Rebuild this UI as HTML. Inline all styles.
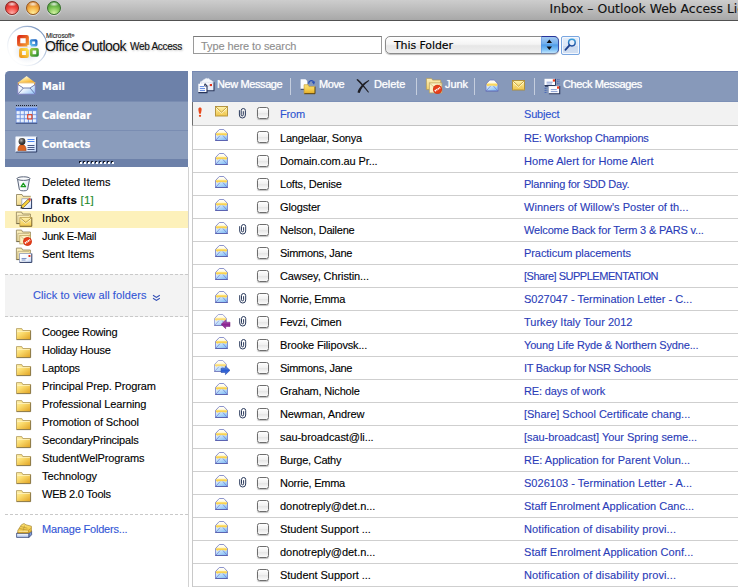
<!DOCTYPE html>
<html lang="en"><head><meta charset="utf-8"><title>Inbox - Outlook Web Access Light</title>
<style>
html,body{margin:0;padding:0;}
body{width:738px;height:587px;overflow:hidden;background:#fff;position:relative;font-family:"Liberation Sans","DejaVu Sans",sans-serif;font-size:11px;letter-spacing:-0.2px;color:#000;-webkit-text-stroke:0.12px;}
div,span,svg{position:absolute;}
svg,symbol{overflow:visible;}
#defs{width:0;height:0;}
/* title bar */
#tb{left:0;top:0;width:738px;height:20px;background:linear-gradient(#cdcdcd,#bbbbbb 50%,#a8a8a8);border-bottom:1px solid #515151;}
#tb .t{left:549.500px;top:0;line-height:17px;font-family:"DejaVu Sans","Liberation Sans",sans-serif;font-size:12.400px;letter-spacing:0;color:#111;white-space:nowrap;}
.tl{top:1px;width:14px;height:14px;border-radius:7px;box-sizing:border-box;box-shadow:0 1px 1px rgba(255,255,255,.55);}
/* header */
#ms{left:46px;top:32px;font-size:6.5px;line-height:8px;letter-spacing:-0.1px;color:#222;}
#oo{-webkit-text-stroke:0;text-shadow:1px 1px 2px rgba(0,0,0,.25);left:45px;top:36.500px;font-size:14px;line-height:18px;letter-spacing:-0.53px;color:#111;white-space:nowrap;}
#wa{text-shadow:1px 1px 2px rgba(0,0,0,.25);left:130px;top:39.500px;font-size:10px;line-height:14px;letter-spacing:-0.29px;color:#111;white-space:nowrap;}
#sb{left:193px;top:36px;width:189px;height:18px;box-sizing:border-box;border:1px solid #9a9a9a;border-top-color:#7a7a7a;background:#fff;}
#sb span{left:7px;top:1px;line-height:17px;font-size:11px;color:#8e8e8e;letter-spacing:-0.1px;white-space:nowrap;}
#sel{left:385px;top:36px;width:174px;height:18px;box-sizing:border-box;border:1px solid #8b8b8b;border-radius:5px;background:linear-gradient(#ffffff,#f4f4f4 45%,#e6e6e6 55%,#f0f0f0);box-shadow:0 1px 1px rgba(0,0,0,.25);}
#sel .t{left:8px;top:1px;line-height:16px;font-family:"DejaVu Sans","Liberation Sans",sans-serif;font-size:11px;letter-spacing:-0.1px;color:#000;white-space:nowrap;}
#sel .a{right:-1px;top:-1px;width:18px;height:18px;box-sizing:border-box;border:1px solid #3a50a8;border-top-color:#26349a;border-bottom-color:#7a88a8;border-left-color:rgba(90,140,220,.5);border-radius:0 5px 5px 0;background:linear-gradient(#a4c8f0,#72b0ee 42%,#4e9ce8 50%,#7cc0f6 78%,#bfe4fc);}
#sbtn{left:561px;top:36px;width:18.500px;height:18.500px;box-sizing:border-box;border:1px solid #7aa6e0;border-radius:2px;background:linear-gradient(#e4edfa 0%,#dce7f7 50%,#cad9ee 52%,#d3e0f2 100%);box-shadow:inset 0 0 0 1px #f4f8fd;}
/* nav */
#nav{left:5px;top:71px;width:183px;height:96px;background:#6d81a9;border-radius:4.500px 0 0 0;overflow:hidden;}
#nav .n{left:0;width:183px;height:29px;box-sizing:border-box;}
#nav .n span{left:37px;top:1px;line-height:29px;font-weight:bold;font-family:"DejaVu Sans Condensed","Liberation Sans",sans-serif;font-size:11px;color:#fff;letter-spacing:-0.1px;}
#nav .l{background:#8a9cbc;border-top:1px solid #7a8db2;}
#nav .l span{top:-1px;}
#grip{left:74px;top:90px;}
#split{left:188px;top:167px;width:1px;height:420px;background:#d2d2d2;}
/* folders */
.fi{left:5px;width:183px;height:18px;}
.fi span{left:37px;top:1px;line-height:17px;white-space:nowrap;font-size:11px;letter-spacing:0;}
.fi .fic{left:11px;top:1px;}
.fi.sel{background:#fdf1bb;}
#more{left:5px;top:274px;width:183px;height:43px;background:#f3f3f3;border-top:1px dashed #c9c9c9;border-bottom:1px dashed #c9c9c9;box-sizing:border-box;}
#more span{letter-spacing:0.09px;left:28px;top:0;line-height:41px;color:#3356d6;white-space:nowrap;}
#dash2{left:5px;top:514px;width:183px;height:0;border-top:1px dashed #c9c9c9;}
a{color:inherit;text-decoration:none;}
/* toolbar */
#tool{left:192px;top:71px;width:546px;height:31px;background:#8799ba;box-sizing:border-box;border-top:1px solid #7487b1;border-bottom:1px solid #7d90b6;}
#tool:before{content:"";position:absolute;left:0;top:0;width:1px;height:29px;background:#7a8db5;}
#tool .t{top:0;line-height:25px;color:#fff;white-space:nowrap;font-size:11px;letter-spacing:-0.4px;text-shadow:0 0 1px rgba(255,255,255,.6);}
#tool .s{top:6px;width:1px;height:17px;background:#c5cede;}
#tool svg{top:5px;}
/* list header */
#lh{left:192px;top:102px;width:546px;height:24px;box-sizing:border-box;background:#f2f2f2;border-left:1px solid #6e6e6e;border-bottom:1px solid #c2c2c2;}
#lh .t{top:1px;line-height:23px;color:#2c52d0;}
#lline{left:192px;top:126px;width:1px;height:461px;background:#c8c8c8;}
/* rows */
.row{left:193px;width:545px;height:23px;box-sizing:border-box;border-bottom:1px solid #cfcfcf;}
.row .ri{left:22px;top:3px;}
.row .clip{left:46px;top:5px;}
.cb{left:64px;top:5px;width:12px;height:12px;box-sizing:border-box;border:1px solid #6e6e6e;border-radius:2.500px;background:linear-gradient(#fefefe,#f0f0f0 50%,#e6e6e6 52%,#fafafa);box-shadow:0 1px 1px rgba(0,0,0,.25);}
.fr{left:87px;top:0;line-height:22px;white-space:nowrap;color:#000;}
.su{left:331px;top:0;line-height:22px;white-space:nowrap;color:#2a3cb8;letter-spacing:-0.15px;}
.r0 .ri{top:2px;}
.r0 .cb{top:4px;}

</style></head>
<body>
<svg id="defs" width="0" height="0" aria-hidden="true">
<defs>
<linearGradient id="g-env" x1="0" y1="0" x2=".7" y2="1"><stop offset="0" stop-color="#f4faff"/><stop offset="1" stop-color="#86c0f6"/></linearGradient>
<linearGradient id="g-flap" x1="0" y1="0" x2="0" y2="1"><stop offset="0" stop-color="#ffffff"/><stop offset=".42" stop-color="#fffbe4"/><stop offset=".6" stop-color="#fbdc6a"/><stop offset=".76" stop-color="#f8d04e"/><stop offset="1" stop-color="#fdeeb0"/></linearGradient>
<linearGradient id="g-fold" x1="0" y1="0" x2=".8" y2="1"><stop offset="0" stop-color="#fff4b4"/><stop offset=".45" stop-color="#fbdc6e"/><stop offset="1" stop-color="#e4aa2c"/></linearGradient>
<linearGradient id="g-yenv" x1="0" y1="0" x2="0" y2="1"><stop offset="0" stop-color="#fff3ac"/><stop offset="1" stop-color="#f2c84c"/></linearGradient>
<linearGradient id="g-cream" x1="0" y1="0" x2=".6" y2="1"><stop offset="0" stop-color="#fdf3c8"/><stop offset="1" stop-color="#f0d680"/></linearGradient>
<linearGradient id="g-wenv" x1="0" y1="0" x2="1" y2="1"><stop offset="0" stop-color="#ffffff"/><stop offset="1" stop-color="#dfe6f6"/></linearGradient>
<linearGradient id="g-gold" x1="0" y1="0" x2="0" y2="1"><stop offset="0" stop-color="#fbe27a"/><stop offset=".5" stop-color="#f6d050"/><stop offset="1" stop-color="#e2aa26"/></linearGradient>
<linearGradient id="g-cream2" x1="0" y1="0" x2="0" y2="1"><stop offset="0" stop-color="#fdf0bc"/><stop offset="1" stop-color="#f0cf6a"/></linearGradient>
<linearGradient id="g-tray" x1="0" y1="0" x2="0" y2="1"><stop offset="0" stop-color="#ffffff"/><stop offset="1" stop-color="#a8c0ee"/></linearGradient>
<linearGradient id="g-cell" x1="0" y1="0" x2="1" y2="1"><stop offset="0" stop-color="#ffffff"/><stop offset="1" stop-color="#cfe0fa"/></linearGradient>
<linearGradient id="g-card" x1="0" y1="0" x2="1" y2="1"><stop offset="0" stop-color="#ffffff"/><stop offset=".6" stop-color="#f4f8ff"/><stop offset="1" stop-color="#b8d0f8"/></linearGradient>
<radialGradient id="g-head" cx=".4" cy=".35" r=".7"><stop offset="0" stop-color="#b0b0b0"/><stop offset=".5" stop-color="#4a4a4a"/><stop offset="1" stop-color="#1c1c1c"/></radialGradient>
<linearGradient id="g-lens" x1="0" y1="0" x2="0" y2="1"><stop offset="0" stop-color="#3aa0dc"/><stop offset="1" stop-color="#1c4a9c"/></linearGradient>
<linearGradient id="g-oflap" x1=".2" y1="0" x2=".8" y2="1"><stop offset="0" stop-color="#fffdf0"/><stop offset=".45" stop-color="#fde08c"/><stop offset="1" stop-color="#f7a616"/></linearGradient>
<linearGradient id="g-mbody" x1="0" y1="0" x2="1" y2="1"><stop offset="0" stop-color="#ffffff"/><stop offset=".5" stop-color="#eaf3fe"/><stop offset="1" stop-color="#8cc0f8"/></linearGradient>
<linearGradient id="g-bin" x1="0" y1="0" x2="1" y2="0"><stop offset="0" stop-color="#e8eef8"/><stop offset=".35" stop-color="#ffffff"/><stop offset="1" stop-color="#dfe8f6"/></linearGradient>
<linearGradient id="g-purple" x1="0" y1="0" x2="0" y2="1"><stop offset="0" stop-color="#c870c8"/><stop offset=".5" stop-color="#8a2490"/><stop offset="1" stop-color="#a040a8"/></linearGradient>
<linearGradient id="g-blue" x1="0" y1="0" x2="0" y2="1"><stop offset="0" stop-color="#7aa6f2"/><stop offset=".5" stop-color="#2a5cd2"/><stop offset="1" stop-color="#4a7ae0"/></linearGradient>
<symbol id="i-bfolder" viewBox="0 0 17 18">
 <path d="M.4 2.100 H5.600 L6.600 4 H14.400 V13.600 H.4 Z" fill="url(#g-cream)"/>
 <path d="M1.800 5.400 H13 V13 H1.800 Z" fill="#fdf6d6" fill-opacity=".4"/>
 <path d="M.4 13.600 V2.100 H5.600 L6.600 4 H14.400 V13.600" fill="none" stroke="#8e8058" stroke-width=".8"/>
 <path d="M1.900 13 V5.400 H13" fill="none" stroke="#a89a6c" stroke-width=".6"/>
 <path d="M.4 13.600 H14.400" stroke="#5a5238" stroke-width=".9"/>
</symbol>
<symbol id="i-open" viewBox="0 0 18 16">
 <rect x=".5" y="4.5" width="12" height="7" fill="url(#g-env)"/>
 <path d="M.5 4.500 L4.300 .5 H8.800 L12.500 4.500 L12.500 5.200 L10.600 7.300 L9.400 6.200 H3.600 L2.400 7.300 L.5 5.200 Z" fill="url(#g-flap)"/>
 <path d="M.9 11.200 L5 6.600 M12.100 11.200 L8 6.600" fill="none" stroke="#7488d0" stroke-width=".8"/>
 <path d="M.5 4.500 L4.300 .5 H8.800 L12.500 4.500" fill="none" stroke="#7078c0" stroke-width=".8"/>
 <path d="M.5 4.500 V11.500 M12.500 11.500 V4.500" fill="none" stroke="#747cc4" stroke-width=".8"/><path d="M.2 11.500 H12.800" stroke="#5c64b2" stroke-width="1"/>
</symbol>
<symbol id="i-reply" viewBox="0 0 18 16">
 <g opacity=".8" transform="translate(-1 0)"><use href="#i-open"/></g>
 <path d="M6.100 10.300 L10.700 6 V8.200 H15 V12.500 H10.700 V14.700 Z" fill="url(#g-purple)" stroke="#701878" stroke-width=".5"/>
</symbol>
<symbol id="i-fwd" viewBox="0 0 18 16">
 <g opacity=".8" transform="translate(-1 0)"><use href="#i-open"/></g>
 <path d="M15 10.300 L10.400 6 V8.200 H6.100 V12.500 H10.400 V14.700 Z" fill="url(#g-blue)" stroke="#1c3c9c" stroke-width=".5"/>
</symbol>
<symbol id="i-clip" viewBox="0 0 8 12">
 <path d="M.7 2.200 V7 A3 3 0 0 0 6.700 7 V2.600 A2.100 2.100 0 0 0 2.500 2.600 V6.800 A1.050 1.050 0 0 0 4.600 6.800 V3.200" fill="none" stroke="#2a3a5c" stroke-width="1"/>
</symbol>
<symbol id="i-folder" viewBox="0 0 16 13">
 <path d="M.5 .6 H5.800 L6.800 2.500 H14.600 V11.600 H.5 Z" fill="url(#g-fold)"/>
 <path d="M1.200 3.300 H13.800" stroke="#fff6c8" stroke-width=".9"/>
 <path d="M14.600 2.500 V11.600 H.5" fill="none" stroke="#7c6a3c" stroke-width=".9"/>
 <path d="M.5 11.600 V.6 H5.800 L6.800 2.500 H14.600" fill="none" stroke="#b09858" stroke-width=".8"/>
</symbol>
<symbol id="i-yenv" viewBox="0 0 14 11">
 <rect x=".5" y=".5" width="12" height="9.500" fill="url(#g-yenv)" stroke="#ae8c34" stroke-width=".9"/>
 <path d="M1 9.600 L4.800 5.600 M12 9.600 L8.200 5.600" fill="none" stroke="#e6c25a" stroke-width=".7"/>
 <path d="M.9 1.800 L6.500 7 L12.100 1.800" fill="none" stroke="#fffbe2" stroke-width="1"/>
 <path d="M.9 1 L6.500 6.200 L12.100 1" fill="none" stroke="#b8922c" stroke-width=".8"/>
</symbol>
</defs>
</svg>
<div id="tb">
 <span class="tl" style="left:5px;background:radial-gradient(ellipse 5px 2.500px at 50% 17%,rgba(255,255,255,.85),rgba(255,255,255,0)),radial-gradient(circle at 50% 95%,#ffb4ae 0%,#f4473f 48%,#b01c1c 100%);border:1px solid #8c2420"></span>
 <span class="tl" style="left:26px;background:radial-gradient(ellipse 5px 2.500px at 50% 17%,rgba(255,255,255,.85),rgba(255,255,255,0)),radial-gradient(circle at 50% 95%,#fff0a0 0%,#f6b244 48%,#c2641a 100%);border:1px solid #96561c"></span>
 <span class="tl" style="left:47px;background:radial-gradient(ellipse 5px 2.500px at 50% 17%,rgba(255,255,255,.85),rgba(255,255,255,0)),radial-gradient(circle at 50% 95%,#d8f4a8 0%,#7cc452 48%,#2e7a24 100%);border:1px solid #35702a"></span>
 <span class="t">Inbox – Outlook Web Access Light</span>
</div>
<svg id="logo" style="left:0;top:21px" width="60" height="50" viewBox="0 0 60 50">
 <defs>
  <linearGradient id="lg-c" x1=".15" y1=".85" x2=".85" y2=".15"><stop offset="0" stop-color="#a9bcd8" stop-opacity=".04"/><stop offset=".45" stop-color="#9db2d2" stop-opacity=".4"/><stop offset="1" stop-color="#7f9ac2"/></linearGradient>
  <radialGradient id="lg-s" cx=".5" cy=".5" r=".5"><stop offset="0" stop-color="#b9c4da" stop-opacity=".55"/><stop offset=".6" stop-color="#c9d2e4" stop-opacity=".3"/><stop offset="1" stop-color="#dfe5f0" stop-opacity="0"/></radialGradient>
  <linearGradient id="lg-r" x1="0" y1="0" x2="1" y2="1"><stop offset="0" stop-color="#dc2c18"/><stop offset="1" stop-color="#f49a30"/></linearGradient>
  <linearGradient id="lg-b" x1="1" y1="0" x2="0" y2="1"><stop offset="0" stop-color="#1c62c0"/><stop offset="1" stop-color="#68c0ec"/></linearGradient>
  <linearGradient id="lg-y" x1="0" y1="1" x2="1" y2="0"><stop offset="0" stop-color="#f09a1c"/><stop offset="1" stop-color="#fbe04e"/></linearGradient>
  <linearGradient id="lg-g" x1="0" y1="0" x2="1" y2="1"><stop offset="0" stop-color="#96c83a"/><stop offset="1" stop-color="#2f9034"/></linearGradient>
 </defs>
 <circle cx="27.200" cy="25" r="19.600" fill="#fff" stroke="url(#lg-c)" stroke-width="1.100"/>
 <ellipse cx="27.500" cy="30" rx="15" ry="13" fill="url(#lg-s)"/>
 <rect x="18.700" y="15.700" width="8.600" height="8.200" rx=".6" fill="#fdfdfd" fill-opacity=".7" stroke="url(#lg-r)" stroke-width="3.200"/>
 <rect x="31" y="19.400" width="5.300" height="4.900" rx=".5" fill="#fdfdfd" fill-opacity=".7" stroke="url(#lg-b)" stroke-width="2.400"/>
 <rect x="20.600" y="28.500" width="6.800" height="7" rx=".6" fill="#fdfdfd" fill-opacity=".7" stroke="url(#lg-y)" stroke-width="3"/>
 <rect x="31.300" y="28.300" width="6.200" height="6.200" rx=".5" fill="#fdfdfd" fill-opacity=".7" stroke="url(#lg-g)" stroke-width="2.600"/>
 <path d="M27 24.800 H31 M27.600 27.600 H30.600 M29 24 V29" stroke="#fff" stroke-width="1" stroke-opacity=".8"/>
</svg>
<span id="ms">Microsoft<span style="position:static;font-size:4px;vertical-align:top">®</span></span>
<span id="oo">Office Outlook</span>
<span id="wa">Web Access</span>
<div id="sb"><span>Type here to search</span></div>
<div id="sel"><span class="t">This Folder</span><span class="a"><svg width="16" height="16" style="left:0;top:0" viewBox="0 0 16 16"><path d="M7.300 2.500 L10 5.900 H4.600 Z M7.300 13 L10 9.400 H4.600 Z" fill="#0c0c10"/></svg></span></div>
<div id="sbtn"><svg width="16" height="16" style="left:0;top:0" viewBox="0 0 16 16"><circle cx="9.900" cy="5.600" r="3.300" fill="#e4effc" stroke="url(#g-lens)" stroke-width="1.500"/><path d="M7.400 8.300 L3.400 12.800" stroke="#1c3e8c" stroke-width="1.800" stroke-linecap="round"/></svg></div>

<div id="nav">
 <div class="n" style="top:0;height:30px"><svg style="left:12px;top:5px" width="20" height="19" viewBox="0 0 20 19">
   <path d="M.8 6.800 L9.600 0 L18.300 6.800 Z" fill="url(#g-oflap)"/>
   <rect x=".8" y="6.400" width="17.500" height="11.800" fill="url(#g-mbody)"/>
   <path d="M.8 6.400 H18.300 V8.800 L17.300 9.400 V7.600 H1.800 V9.400 L.8 8.800 Z" fill="#f6a81c"/>
   <path d="M2 7.400 H17 V9.300 L13 11.700 H6.200 L2 9.300 Z" fill="#fff"/>
   <path d="M1 8.600 L6.400 12 H13 L18.100 8.600 M1.100 17.900 L6.400 12 M18 17.900 L13 12" fill="none" stroke="#54629a" stroke-width=".8"/>
   <path d="M.8 6.800 V18.200 H18.300 V6.800" fill="none" stroke="#7a78bc" stroke-width=".8"/>
  </svg><span style="line-height:30px">Mail</span></div>
 <div class="n l" style="top:30px"><svg style="left:10px;top:3px" width="22" height="19" viewBox="-0.5 0 22 19">
   <path d="M.5 .5 H21.500" stroke="#1c2030" stroke-width="1" stroke-dasharray="1 1"/>
   <rect x=".3" y="2" width="21.400" height="16.300" fill="#6f92de"/>
   <rect x=".3" y="2" width="21.400" height="3.300" fill="#5a86ea"/>
   <path d="M.3 2.400 H21.700" stroke="#a9c4fa" stroke-width=".8"/>
   <g fill="url(#g-cell)"><rect x="1.1" y="6.2" width="3.200" height="3.100"/><rect x="5.2" y="6.2" width="3.200" height="3.100"/><rect x="9.3" y="6.2" width="3.200" height="3.100"/><rect x="13.4" y="6.2" width="3.200" height="3.100"/><rect x="17.5" y="6.2" width="3.200" height="3.100"/><rect x="1.1" y="10.2" width="3.200" height="3.100"/><rect x="5.2" y="10.2" width="3.200" height="3.100"/><rect x="9.3" y="10.2" width="3.200" height="3.100"/><rect x="13.4" y="10.2" width="3.200" height="3.100"/><rect x="17.5" y="10.2" width="3.200" height="3.100"/><rect x="1.1" y="14.3" width="3.200" height="3.100"/><rect x="5.2" y="14.3" width="3.200" height="3.100"/><rect x="9.3" y="14.3" width="3.200" height="3.100"/><rect x="13.4" y="14.3" width="3.200" height="3.100"/><rect x="17.5" y="14.3" width="3.200" height="3.100"/></g>
   <rect x="12.200" y="9.700" width="4.200" height="4.200" fill="#e4ecfc" stroke="#e23a18" stroke-width="1.100"/>
   <path d="M.3 18.300 H21.700" stroke="#3a4a78" stroke-width=".9"/>
  </svg><span>Calendar</span></div>
 <div class="n l" style="top:59px"><svg style="left:10px;top:5px" width="22" height="16" viewBox="-0.5 -0.5 22 16">
   <rect x=".3" y=".3" width="20.900" height="15.200" fill="url(#g-card)"/>
   <path d="M21.200 .3 V15.500 H.3" fill="none" stroke="#2c3a62" stroke-width="1"/>
   <path d="M.3 15.500 V.3 H21.200" fill="none" stroke="#e8eefa" stroke-width=".7"/>
   <path d="M12 3 H19 M12 5 H19" stroke="#4a84f0" stroke-width="1"/>
   <path d="M12 9 H19 M12 11 H19 M12 13 H19" stroke="#4a5a86" stroke-width="1"/>
   <path d="M2.400 14 C2.400 10 3.800 8.200 6.500 8.200 C9.200 8.200 10.600 10 10.600 14 Z" fill="#dc6420" stroke="#a8400e" stroke-width=".6"/>
   <circle cx="6.500" cy="5" r="3.400" fill="url(#g-head)"/>
  </svg><span>Contacts</span></div>
 <svg id="grip" viewBox="0 0 36 3" width="36" height="3"><rect x="0" y="0" width="2" height="2" fill="#161a2a"/><rect x="1" y="1" width="2" height="2" fill="#fff"/><rect x="4" y="0" width="2" height="2" fill="#161a2a"/><rect x="5" y="1" width="2" height="2" fill="#fff"/><rect x="8" y="0" width="2" height="2" fill="#161a2a"/><rect x="9" y="1" width="2" height="2" fill="#fff"/><rect x="12" y="0" width="2" height="2" fill="#161a2a"/><rect x="13" y="1" width="2" height="2" fill="#fff"/><rect x="16" y="0" width="2" height="2" fill="#161a2a"/><rect x="17" y="1" width="2" height="2" fill="#fff"/><rect x="20" y="0" width="2" height="2" fill="#161a2a"/><rect x="21" y="1" width="2" height="2" fill="#fff"/><rect x="24" y="0" width="2" height="2" fill="#161a2a"/><rect x="25" y="1" width="2" height="2" fill="#fff"/><rect x="28" y="0" width="2" height="2" fill="#161a2a"/><rect x="29" y="1" width="2" height="2" fill="#fff"/><rect x="32" y="0" width="2" height="2" fill="#161a2a"/><rect x="33" y="1" width="2" height="2" fill="#fff"/></svg>
</div>
<div id="split"></div>

<div id="tool">
 <svg style="left:6px;top:6px" width="17" height="16" viewBox="0 0 17 16">
  <path d="M2.200 4.300 L7.600 .4 H10.400 L15.800 4.300 Z" fill="#f4f7fc" stroke="#e4e9f4" stroke-width=".8" stroke-dasharray="1 .8"/>
  <rect x="2" y="4.300" width="14" height="8.400" fill="url(#g-wenv)"/>
  <path d="M2.300 4.600 L9 9 L15.700 4.600" fill="none" stroke="#c4cde2" stroke-width=".7"/>
  <path d="M16 4.300 V12.700 H2" fill="none" stroke="#2c3a5e" stroke-width="1.100"/>
  <rect x="11.800" y="6" width="2.200" height="2.100" fill="#e2301a"/>
  <path d="M.3 5.700 H6.800 L9 7.900 V14.600 H.3 Z" fill="#fdfdff"/>
  <path d="M6.800 5.700 L9 7.900 V14.600 H.3" fill="none" stroke="#27345a" stroke-width="1.100"/>
  <path d="M6.600 5.900 V8.100 H8.800" fill="none" stroke="#27345a" stroke-width=".8"/>
  <path d="M1.800 8.600 H6 M1.800 10.600 H7 M1.800 12.600 H7" stroke="#5c86e2" stroke-width="1"/>
 </svg>
 <span class="t" style="left:25px">New Message</span>
 <span class="s" style="left:98px"></span>
 <svg style="left:108px;top:7px" width="16" height="16" viewBox="0 0 16 16">
  <path d="M.6 .3 H5.500 L7.200 2 V10.600 H.6 Z" fill="#fbfcff"/>
  <path d="M.6 10.300 H5" stroke="#2c3a5e" stroke-width="1"/>
  <path d="M8.600 4.600 C8.800 1.200 12.600 .6 13.800 3.400" fill="none" stroke="#2a50b8" stroke-width="1.300"/>
  <path d="M11.800 3 L14 5.700 L15.200 2.400 Z" fill="#2a50b8"/>
  <path d="M4.100 5.700 H8 L9 7.600 H15 V14.700 H4.100 Z" fill="url(#g-gold)"/>
  <path d="M15 7.600 V14.700 H4.100" fill="none" stroke="#5a420c" stroke-width="1"/>
  <path d="M4.100 14.700 V5.700 H8 L9 7.600 H15" fill="none" stroke="#caa23a" stroke-width=".7"/>
 </svg>
 <span class="t" style="left:127px">Move</span>
 <svg style="left:164px;top:7px" width="14" height="15" viewBox="0 0 14 15">
  <path d="M.4 .7 L1.700 -.1 C5.200 3 9.200 7.600 12.900 13 L12.300 13.700 C8.500 9.200 4.400 4.600 .4 .7 Z" fill="#1e1e24"/>
  <path d="M12.800 1 L13.300 1.700 C9 4.600 5.200 9 3.700 13.900 L1.500 13.600 C2.500 9 6.800 4 12.800 1 Z" fill="#1e1e24"/>
 </svg>
 <span class="t" style="left:182px;letter-spacing:-0.1px">Delete</span>
 <span class="s" style="left:224px"></span>
 <svg style="left:234px;top:6px" width="17" height="16" viewBox="0 0 17 16">
  <path d="M.4 .4 H5.600 L6.600 2.100 H14.700 V11.600 H.4 Z" fill="url(#g-cream2)" stroke="#b49a50" stroke-width=".7"/>
  <rect x="3.300" y="4.900" width="12.600" height="10" fill="#fbf0c4" stroke="#b8a05a" stroke-width=".7"/>
  <path d="M3.600 5.200 L9.600 10.400 L15.600 5.200" fill="none" stroke="#cbb26a" stroke-width=".7"/>
  <circle cx="11.500" cy="11.300" r="4.400" fill="#e8401a"/>
  <circle cx="11.500" cy="11.300" r="4.100" fill="none" stroke="#c42c10" stroke-width=".6"/>
  <path d="M8.800 13 L14.200 9.600" stroke="#fff" stroke-width="1.700" stroke-dasharray="1.300 .5"/>
 </svg>
 <span class="t" style="left:253px;letter-spacing:-0.1px">Junk</span>
 <span class="s" style="left:282px"></span>
 <svg viewBox="-0.5 -0.5 18 16" style="left:293px;top:7px" width="18" height="16"><use href="#i-open"/></svg>
 <svg style="left:320px;top:8px" width="14" height="11"><use href="#i-yenv"/></svg>
 <span class="s" style="left:342px"></span>
 <svg style="left:352px;top:6px" width="17" height="16" viewBox="0 0 17 16">
  <rect x=".5" y=".8" width="11" height="6.700" fill="#fdfdff"/>
  <path d="M11.500 .8 V7.500 H.5" fill="none" stroke="#2c3a5e" stroke-width="1"/>
  <rect x="8.800" y="1.300" width="2.200" height="2.300" fill="#ee3a1e"/>
  <path d="M2.600 4.200 H8.600 M2.600 6 H8" stroke="#6a86c8" stroke-width=".8"/>
  <path d="M13.200 1.700 H15.500 M13.200 3.700 H15.500 M13.200 5.700 H15.500" stroke="#4666b4" stroke-width="1" stroke-dasharray="1.300 .6"/>
  <rect x="4.800" y="8.100" width="10.900" height="7.600" fill="#fdfdff"/>
  <path d="M15.700 8.100 V15.700 H4.800" fill="none" stroke="#2c3a5e" stroke-width="1.100"/>
  <rect x="13" y="8.400" width="2.200" height="2.300" fill="#ee3a1e"/>
  <path d="M6.800 11.600 H12.800 M6.800 13.600 H13.500" stroke="#6a86c8" stroke-width=".8"/>
  <path d="M.6 10.300 H3.200 M.6 12.400 H3.200 M.6 14.500 H3.200" stroke="#4666b4" stroke-width="1" stroke-dasharray="1.300 .6"/>
  <path d="M1 8.300 H4" stroke="#2c3a5e" stroke-width=".9"/>
 </svg>
 <span class="t" style="left:371px">Check Messages</span>
</div>

<div id="lh">
 <svg style="left:4px;top:5px" width="5" height="10" viewBox="-0.5 -0.5 5 10"><path d="M2.500 0 C4.600 0 4.400 2 3.300 6.300 H1.700 C.6 2 .4 0 2.500 0 Z" fill="#e8481a"/><circle cx="2.500" cy="8.300" r="1.150" fill="#e8481a"/></svg>
 <svg style="left:22px;top:4px" width="14" height="11"><use href="#i-yenv"/></svg>
 <svg viewBox="-0.7 0 8 12" style="left:45px;top:6px" width="8" height="12"><use href="#i-clip"/></svg>
 <span class="cb" style="left:64px;top:5px"></span>
 <span class="t" style="left:87px">From</span>
 <span class="t" style="left:331px">Subject</span>
</div>
<div id="lline"></div>
<div class="fi" style="top:173px"><svg class="fic" style="top:3px;left:11px" width="16" height="16" viewBox="0 0 16 16">
  <path d="M1.500 3 L3.300 13.200 C3.500 14.400 5 14.800 7.500 14.800 C10 14.800 11.500 14.400 11.700 13.200 L13.500 3 Z" fill="url(#g-bin)" stroke="#5a6478" stroke-width="1"/>
  <ellipse cx="7.500" cy="2.600" rx="6.500" ry="1.800" fill="#fbfcfe" stroke="#5a6478" stroke-width="1"/>
  <path d="M7.300 7.300 L9.500 10.700 H5.100 Z" fill="none" stroke="#169a1c" stroke-width="1.300" stroke-linejoin="round"/>
 </svg><span style="letter-spacing:0.05px">Deleted Items</span></div>
<div class="fi" style="top:191px"><svg class="fic" style="top:2px" width="17" height="17" viewBox="0 0 17 17">
  <path d="M.5 1.500 H6 L7 3.300 H14.700 V12.400 H.5 Z" fill="url(#g-cream)"/>
  <path d="M.5 12.400 V1.500 H6 L7 3.300 H14.700" fill="none" stroke="#8a7c54" stroke-width=".8"/>
  <path d="M.5 12.400 H6" stroke="#4a442e" stroke-width=".9"/>
  <rect x="5.800" y="5.700" width="9.800" height="9.800" fill="url(#g-card)"/>
  <path d="M15.600 5.700 V15.500 H5.800" fill="none" stroke="#2c3a62" stroke-width="1"/>
  <path d="M5.800 15.500 V5.700 H15.600" fill="none" stroke="#8a94b0" stroke-width=".7"/>
  <path d="M4.800 15.300 L5.600 12.600 L12 6.200 L14 8.200 L7.500 14.600 Z" fill="#f8d03a" stroke="#3a3420" stroke-width=".6"/>
  <path d="M12 6.200 L13 5.200 C13.600 4.700 15.300 6.300 14.900 7.100 L14 8.200 Z" fill="#e4503c"/>
  <path d="M4.800 15.300 L5.300 13.600 L6.500 14.800 Z" fill="#2a2a2a"/>
 </svg><span><b style="font-size:11.500px;letter-spacing:0.350px">Drafts</b> <span style="position:static;color:#1f8a2e;font-size:11.500px;letter-spacing:0.300px">[1]</span></span></div>
<div class="fi sel" style="top:211px;height:17px"><svg class="fic" style="top:-1px" width="17" height="18" viewBox="0 0 17 18">
  <use href="#i-bfolder"/>
  <rect x="3.800" y="7.500" width="12" height="8.800" fill="url(#g-yenv)"/>
  <path d="M4.200 8.600 L9.800 13.200 L15.400 8.600" fill="none" stroke="#fffbe0" stroke-width="1"/>
  <path d="M4.200 7.900 L9.800 12.500 L15.400 7.900" fill="none" stroke="#a8862c" stroke-width=".8"/>
  <path d="M3.800 16.300 V7.500 H15.800" fill="none" stroke="#b89a44" stroke-width=".7"/>
  <path d="M15.800 7.500 V16.300 H3.800" fill="none" stroke="#6a5420" stroke-width=".9"/>
 </svg><span style="top:-1px;letter-spacing:0.08px">Inbox</span></div>
<div class="fi" style="top:227px"><svg class="fic" style="top:1px" width="17" height="18" viewBox="0 0 17 18">
  <use href="#i-bfolder"/>
  <rect x="3.800" y="7.500" width="10.600" height="8.400" fill="#fbf0c4" stroke="#b8a05a" stroke-width=".7"/>
  <path d="M4.200 7.900 L9 12 L13.800 7.900" fill="none" stroke="#c8b06a" stroke-width=".7"/>
  <circle cx="11.500" cy="13.500" r="4.300" fill="#e8401a"/>
  <circle cx="11.500" cy="13.500" r="4" fill="none" stroke="#c42c10" stroke-width=".6"/>
  <path d="M8.900 15.200 L14.100 11.800" stroke="#fff" stroke-width="1.700" stroke-dasharray="1.300 .5"/>
 </svg><span style="letter-spacing:-0.3px">Junk E-Mail</span></div>
<div class="fi" style="top:245px"><svg class="fic" style="top:1px" width="17" height="18" viewBox="0 0 17 18">
  <use href="#i-bfolder"/>
  <rect x="3.500" y="7.500" width="12.300" height="8.900" fill="url(#g-card)"/>
  <path d="M15.800 7.500 V16.400 H3.500" fill="none" stroke="#2c3a62" stroke-width="1"/>
  <path d="M3.500 16.400 V7.500 H15.800" fill="none" stroke="#7f8cb0" stroke-width=".7"/>
  <rect x="12.500" y="9" width="1.900" height="2" fill="#e2301a"/>
  <path d="M5.600 12.500 H10.500 M5.600 14 H9.500" stroke="#7088c0" stroke-width=".9"/>
 </svg><span style="letter-spacing:-0.05px">Sent Items</span></div>
<div id="more"><span><a>Click to view all folders</a></span><svg style="left:147px;top:19px" width="8" height="7" viewBox="-0.5 -0.5 8 7"><path d="M.5 .8 L3.900 2.900 L7.300 .8 M.5 3.800 L3.900 5.900 L7.300 3.800" fill="none" stroke="#2f4cb4" stroke-width="1.100"/></svg></div>
<div id="dash2"></div>
<div class="fi" style="top:520px"><svg class="fic" style="top:3px" width="17" height="16" viewBox="0 0 17 16">
  <path d="M.6 10.400 L3.400 8 H15.600 L13 10.400 Z" fill="#fff" stroke="#4a5a8a" stroke-width=".7"/>
  <path d="M.6 10.400 H13 V14.400 H.6 Z" fill="url(#g-tray)" stroke="#3a4a7a" stroke-width=".8"/>
  <path d="M13 10.400 L15.600 8 V11.800 L13 14.400 Z" fill="#7c9ad8" stroke="#3a4a7a" stroke-width=".8"/>
  <path d="M1.800 7.400 L5.400 1.800 L8 .5 L10 1.800 L15.400 3.200 V8.600 L12.400 10 H1.800 Z" fill="url(#g-gold)" stroke="#a88a3a" stroke-width=".7"/>
  <path d="M4.400 3.400 L11.400 5.200 M3 5.400 L12.400 7.400 M8.500 2.600 L6.600 9.600 M12.400 10 V7.400 L15.400 5" fill="none" stroke="#b8963a" stroke-width=".7"/>
  <path d="M2.400 8.200 H12" stroke="#fff3b8" stroke-width="1"/>
 </svg><span style="color:#3356d6;letter-spacing:-0.19px"><a>Manage Folders...</a></span></div>
<div class="fi" style="top:323px"><svg class="fic" style="top:5px" width="16" height="13"><use href="#i-folder"/></svg><span style="letter-spacing:-0.23px">Coogee Rowing</span></div>
<div class="fi" style="top:341px"><svg class="fic" style="top:5px" width="16" height="13"><use href="#i-folder"/></svg><span style="letter-spacing:-0.23px">Holiday House</span></div>
<div class="fi" style="top:359px"><svg class="fic" style="top:5px" width="16" height="13"><use href="#i-folder"/></svg><span style="letter-spacing:-0.17px">Laptops</span></div>
<div class="fi" style="top:377px"><svg class="fic" style="top:5px" width="16" height="13"><use href="#i-folder"/></svg><span style="letter-spacing:-0.13px">Principal Prep. Program</span></div>
<div class="fi" style="top:395px"><svg class="fic" style="top:5px" width="16" height="13"><use href="#i-folder"/></svg><span style="letter-spacing:-0.1px">Professional Learning</span></div>
<div class="fi" style="top:413px"><svg class="fic" style="top:5px" width="16" height="13"><use href="#i-folder"/></svg><span style="letter-spacing:-0.12px">Promotion of School</span></div>
<div class="fi" style="top:431px"><svg class="fic" style="top:5px" width="16" height="13"><use href="#i-folder"/></svg><span style="letter-spacing:-0.2px">SecondaryPrincipals</span></div>
<div class="fi" style="top:449px"><svg class="fic" style="top:5px" width="16" height="13"><use href="#i-folder"/></svg><span style="letter-spacing:-0.11px">StudentWelPrograms</span></div>
<div class="fi" style="top:467px"><svg class="fic" style="top:5px" width="16" height="13"><use href="#i-folder"/></svg><span style="letter-spacing:-0.08px">Technology</span></div>
<div class="fi" style="top:485px"><svg class="fic" style="top:5px" width="16" height="13"><use href="#i-folder"/></svg><span style="letter-spacing:-0.25px">WEB 2.0 Tools</span></div>
<div id="list">
<div class="row r0" style="top:127px"><svg class="ri" width="18" height="16"><use href="#i-open"/></svg><span class="cb"></span><span class="fr" style="letter-spacing:-0.24px">Langelaar, Sonya</span><span class="su" style="letter-spacing:-0.22px">RE: Workshop Champions</span></div>
<div class="row" style="top:150px"><svg class="ri" width="18" height="16"><use href="#i-open"/></svg><span class="cb"></span><span class="fr" style="letter-spacing:-0.11px">Domain.com.au Pr...</span><span class="su" style="letter-spacing:0.07px">Home Alert for Home Alert</span></div>
<div class="row" style="top:173px"><svg class="ri" width="18" height="16"><use href="#i-open"/></svg><span class="cb"></span><span class="fr" style="letter-spacing:-0.19px">Lofts, Denise</span><span class="su" style="letter-spacing:-0.22px">Planning for SDD Day.</span></div>
<div class="row" style="top:196px"><svg class="ri" width="18" height="16"><use href="#i-open"/></svg><span class="cb"></span><span class="fr" style="letter-spacing:-0.15px">Glogster</span><span class="su" style="letter-spacing:0.03px">Winners of Willow's Poster of th...</span></div>
<div class="row" style="top:219px"><svg class="ri" width="18" height="16"><use href="#i-open"/></svg><svg class="clip" width="8" height="12"><use href="#i-clip"/></svg><span class="cb"></span><span class="fr" style="letter-spacing:-0.21px">Nelson, Dailene</span><span class="su" style="letter-spacing:-0.15px">Welcome Back for Term 3 &amp; PARS v...</span></div>
<div class="row" style="top:242px"><svg class="ri" width="18" height="16"><use href="#i-open"/></svg><span class="cb"></span><span class="fr" style="letter-spacing:-0.29px">Simmons, Jane</span><span class="su" style="letter-spacing:-0.07px">Practicum placements</span></div>
<div class="row" style="top:265px"><svg class="ri" width="18" height="16"><use href="#i-open"/></svg><span class="cb"></span><span class="fr" style="letter-spacing:-0.1px">Cawsey, Christin...</span><span class="su" style="letter-spacing:-0.48px">[Share] SUPPLEMENTATION</span></div>
<div class="row" style="top:288px"><svg class="ri" width="18" height="16"><use href="#i-open"/></svg><svg class="clip" width="8" height="12"><use href="#i-clip"/></svg><span class="cb"></span><span class="fr" style="letter-spacing:-0.22px">Norrie, Emma</span><span class="su" style="letter-spacing:-0.01px">S027047 - Termination Letter - C...</span></div>
<div class="row" style="top:311px"><svg class="ri" width="18" height="16"><use href="#i-reply"/></svg><svg class="clip" width="8" height="12"><use href="#i-clip"/></svg><span class="cb"></span><span class="fr" style="letter-spacing:-0.24px">Fevzi, Cimen</span><span class="su" style="letter-spacing:0.01px">Turkey Italy Tour 2012</span></div>
<div class="row" style="top:334px"><svg class="ri" width="18" height="16"><use href="#i-open"/></svg><svg class="clip" width="8" height="12"><use href="#i-clip"/></svg><span class="cb"></span><span class="fr" style="letter-spacing:-0.14px">Brooke Filipovsk...</span><span class="su" style="letter-spacing:-0.16px">Young Life Ryde &amp; Northern Sydne...</span></div>
<div class="row" style="top:357px"><svg class="ri" width="18" height="16"><use href="#i-fwd"/></svg><span class="cb"></span><span class="fr" style="letter-spacing:-0.28px">Simmons, Jane</span><span class="su" style="letter-spacing:-0.28px">IT Backup for NSR Schools</span></div>
<div class="row" style="top:380px"><svg class="ri" width="18" height="16"><use href="#i-open"/></svg><span class="cb"></span><span class="fr" style="letter-spacing:-0.19px">Graham, Nichole</span><span class="su" style="letter-spacing:-0.13px">RE: days of work</span></div>
<div class="row" style="top:403px"><svg class="ri" width="18" height="16"><use href="#i-open"/></svg><svg class="clip" width="8" height="12"><use href="#i-clip"/></svg><span class="cb"></span><span class="fr" style="letter-spacing:-0.13px">Newman, Andrew</span><span class="su" style="letter-spacing:-0.02px">[Share] School Certificate chang...</span></div>
<div class="row" style="top:426px"><svg class="ri" width="18" height="16"><use href="#i-open"/></svg><span class="cb"></span><span class="fr" style="letter-spacing:-0.07px">sau-broadcast@li...</span><span class="su" style="letter-spacing:-0.05px">[sau-broadcast] Your Spring seme...</span></div>
<div class="row" style="top:449px"><svg class="ri" width="18" height="16"><use href="#i-open"/></svg><span class="cb"></span><span class="fr" style="letter-spacing:-0.25px">Burge, Cathy</span><span class="su" style="letter-spacing:0.01px">RE: Application for Parent Volun...</span></div>
<div class="row" style="top:472px"><svg class="ri" width="18" height="16"><use href="#i-open"/></svg><svg class="clip" width="8" height="12"><use href="#i-clip"/></svg><span class="cb"></span><span class="fr" style="letter-spacing:-0.24px">Norrie, Emma</span><span class="su" style="letter-spacing:0.02px">S026103 - Termination Letter - A...</span></div>
<div class="row" style="top:495px"><svg class="ri" width="18" height="16"><use href="#i-open"/></svg><span class="cb"></span><span class="fr" style="letter-spacing:-0.05px">donotreply@det.n...</span><span class="su" style="letter-spacing:0.01px">Staff Enrolment Application Canc...</span></div>
<div class="row" style="top:518px"><svg class="ri" width="18" height="16"><use href="#i-open"/></svg><span class="cb"></span><span class="fr" style="letter-spacing:-0.05px">Student Support ...</span><span class="su" style="letter-spacing:0.12px">Notification of disability provi...</span></div>
<div class="row" style="top:541px"><svg class="ri" width="18" height="16"><use href="#i-open"/></svg><span class="cb"></span><span class="fr" style="letter-spacing:-0.05px">donotreply@det.n...</span><span class="su" style="letter-spacing:0.06px">Staff Enrolment Application Conf...</span></div>
<div class="row" style="top:564px"><svg class="ri" width="18" height="16"><use href="#i-open"/></svg><span class="cb"></span><span class="fr" style="letter-spacing:-0.05px">Student Support ...</span><span class="su" style="letter-spacing:0.12px">Notification of disability provi...</span></div>
</div>
</body></html>
